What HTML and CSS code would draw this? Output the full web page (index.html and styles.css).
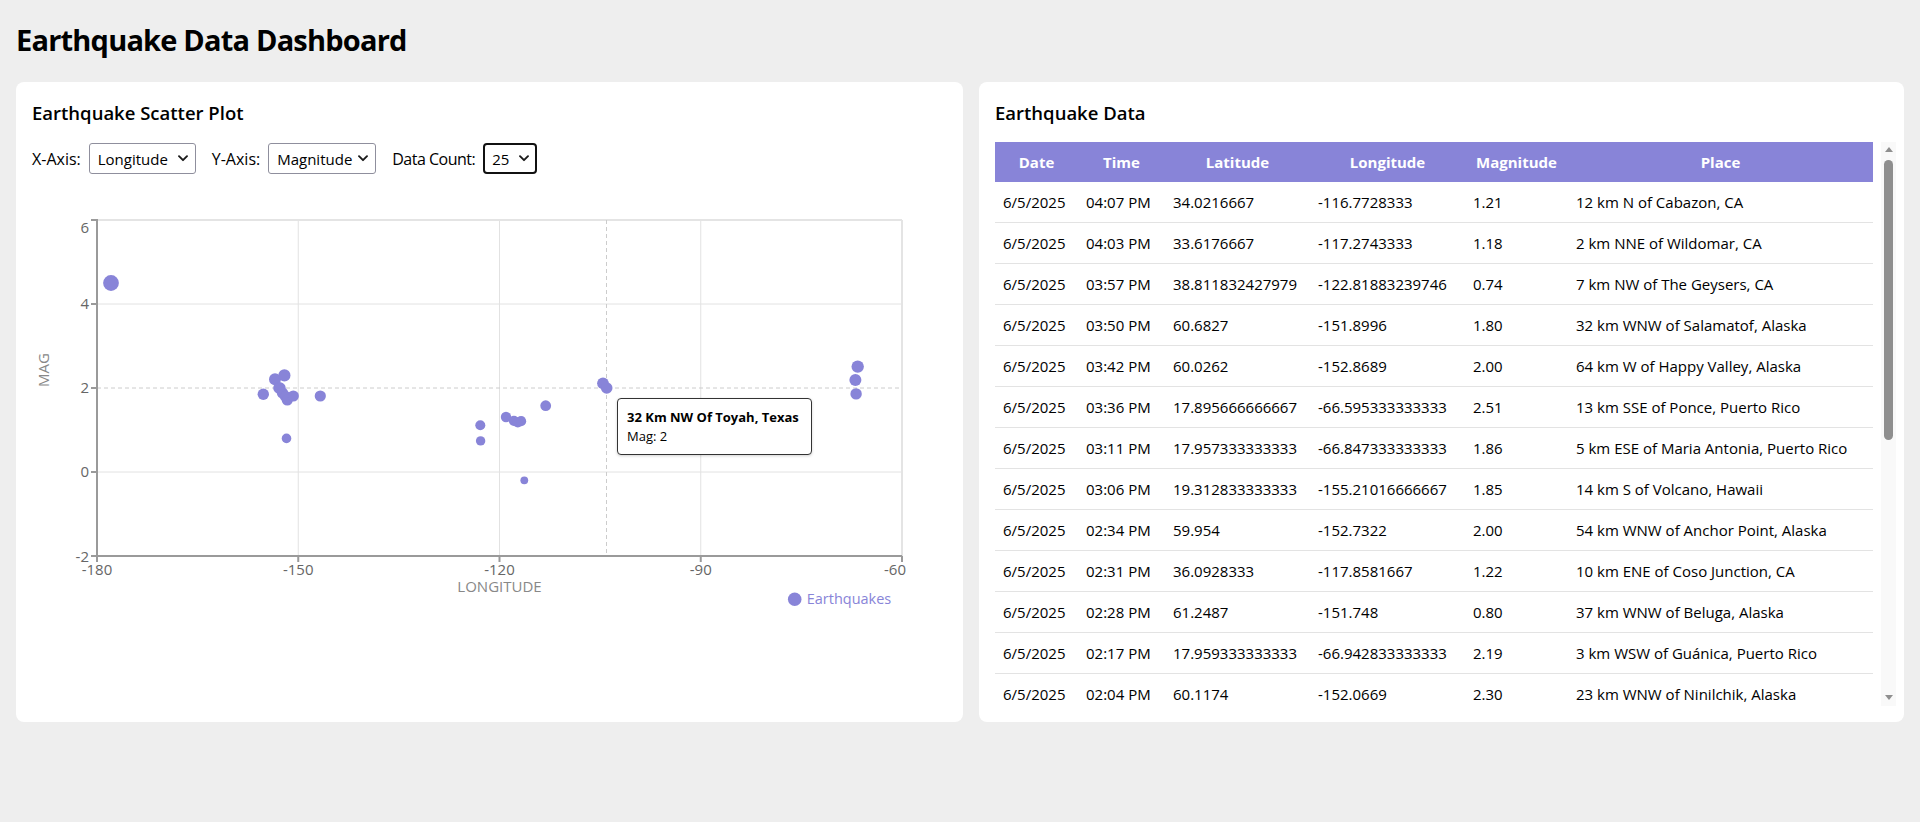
FILE: index.html
```html
<!DOCTYPE html>
<html lang="en">
<head>
<meta charset="utf-8">
<title>Earthquake Data Dashboard</title>
<link rel="stylesheet" href="styles.css">
</head>
<body>
<div class="page">
  <h1 class="page-title">Earthquake Data Dashboard</h1>
  <div class="dashboard">
    <section class="card card-chart">
      <h2 class="card-title">Earthquake Scatter Plot</h2>
      <div class="controls">
        <label class="control-label" for="xaxis">X-Axis:</label>
        <span class="select-wrap">
          <select id="xaxis" class="select select-x"><option>Longitude</option><option>Latitude</option><option>Magnitude</option></select>
          <svg class="chevron" viewBox="0 0 10 7" width="10" height="7"><path d="M1 1.2 L5 5.2 L9 1.2" fill="none" stroke="#1a1a1a" stroke-width="1.9" stroke-linecap="round" stroke-linejoin="round"/></svg>
        </span>
        <label class="control-label" for="yaxis">Y-Axis:</label>
        <span class="select-wrap">
          <select id="yaxis" class="select select-y"><option>Magnitude</option><option>Latitude</option><option>Longitude</option></select>
          <svg class="chevron" viewBox="0 0 10 7" width="10" height="7"><path d="M1 1.2 L5 5.2 L9 1.2" fill="none" stroke="#1a1a1a" stroke-width="1.9" stroke-linecap="round" stroke-linejoin="round"/></svg>
        </span>
        <label class="control-label control-label-tight" for="count">Data Count:</label>
        <span class="select-wrap">
          <select id="count" class="select select-count"><option>25</option><option>50</option><option>100</option></select>
          <svg class="chevron" viewBox="0 0 10 7" width="10" height="7"><path d="M1 1.2 L5 5.2 L9 1.2" fill="none" stroke="#1a1a1a" stroke-width="1.9" stroke-linecap="round" stroke-linejoin="round"/></svg>
        </span>
      </div>
      <div class="chart">
        <svg class="chart-svg" width="915" height="420" viewBox="0 0 915 420">
          <g class="grid">
            <line x1="65" y1="114" x2="870" y2="114"/>
            <line x1="65" y1="282" x2="870" y2="282"/>
            <line x1="266.25" y1="30" x2="266.25" y2="366"/>
            <line x1="467.5" y1="30" x2="467.5" y2="366"/>
            <line x1="668.75" y1="30" x2="668.75" y2="366"/>
          </g>
          <g class="grid-edge">
            <line x1="65" y1="30" x2="870" y2="30"/>
            <line x1="870" y1="30" x2="870" y2="366"/>
          </g>
          <g class="cursor">
            <line x1="65" y1="198" x2="870" y2="198"/>
            <line x1="574.5" y1="30" x2="574.5" y2="366"/>
          </g>
          <g class="axis">
            <line x1="65" y1="29" x2="65" y2="367"/>
            <line x1="64" y1="366" x2="870" y2="366"/>
            <line x1="59" y1="30" x2="65" y2="30"/>
            <line x1="59" y1="114" x2="65" y2="114"/>
            <line x1="59" y1="198" x2="65" y2="198"/>
            <line x1="59" y1="282" x2="65" y2="282"/>
            <line x1="59" y1="366" x2="65" y2="366"/>
            <line x1="65" y1="366" x2="65" y2="372"/>
            <line x1="266.25" y1="366" x2="266.25" y2="372"/>
            <line x1="467.5" y1="366" x2="467.5" y2="372"/>
            <line x1="668.75" y1="366" x2="668.75" y2="372"/>
            <line x1="870" y1="366" x2="870" y2="372"/>
          </g>
          <g class="tick-y">
            <text x="57" y="43.3">6</text>
            <text x="57" y="119">4</text>
            <text x="57" y="203">2</text>
            <text x="57" y="287">0</text>
            <text x="57" y="371.5">-2</text>
          </g>
          <g class="tick-x">
            <text x="65" y="385">-180</text>
            <text x="266.25" y="385">-150</text>
            <text x="467.5" y="385">-120</text>
            <text x="668.75" y="385">-90</text>
            <text x="863" y="385">-60</text>
          </g>
          <text class="axis-label" x="467.5" y="401.5">LONGITUDE</text>
          <text class="axis-label" transform="translate(17 180) rotate(-90)" x="0" y="0">MAG</text>
          <g class="points">
            <circle cx="79" cy="93" r="7.9"/>
            <circle cx="231.3" cy="204.3" r="5.7"/>
            <circle cx="243" cy="189.3" r="6"/>
            <circle cx="247" cy="198" r="5.8"/>
            <circle cx="247.9" cy="198" r="5.8"/>
            <circle cx="252.4" cy="185.4" r="6.1"/>
            <circle cx="250.5" cy="203" r="5.7"/>
            <circle cx="253.5" cy="206.4" r="5.6"/>
            <circle cx="255.3" cy="210" r="5.6"/>
            <circle cx="261.3" cy="206" r="5.6"/>
            <circle cx="254.5" cy="248.4" r="4.8"/>
            <circle cx="288.3" cy="206" r="5.6"/>
            <circle cx="448.3" cy="235.3" r="5"/>
            <circle cx="448.6" cy="250.9" r="4.7"/>
            <circle cx="474" cy="227" r="5.2"/>
            <circle cx="481.9" cy="230.8" r="5.1"/>
            <circle cx="485.8" cy="232.4" r="5.1"/>
            <circle cx="489.1" cy="231.2" r="5.1"/>
            <circle cx="492.3" cy="290.3" r="3.9"/>
            <circle cx="513.7" cy="215.7" r="5.4"/>
            <circle cx="571" cy="193.3" r="5.9"/>
            <circle cx="574.7" cy="198" r="5.8"/>
            <circle cx="825.7" cy="176.6" r="6.2"/>
            <circle cx="823.4" cy="190" r="6"/>
            <circle cx="824.1" cy="203.9" r="5.7"/>
          </g>
          <g class="legend">
            <circle cx="762.7" cy="409.3" r="6.8"/>
            <text x="774.7" y="413.5">Earthquakes</text>
          </g>
        </svg>
        <div class="tooltip">
          <div class="tooltip-title">32 Km NW Of Toyah, Texas</div>
          <div class="tooltip-value">Mag: 2</div>
        </div>
      </div>
    </section>

    <section class="card card-data">
      <h2 class="card-title">Earthquake Data</h2>
      <div class="table-area">
        <div class="table-viewport">
          <table class="data-table">
            <colgroup>
              <col class="col-date"><col class="col-time"><col class="col-lat"><col class="col-lon"><col class="col-mag"><col class="col-place">
            </colgroup>
            <thead>
              <tr><th>Date</th><th>Time</th><th>Latitude</th><th>Longitude</th><th>Magnitude</th><th>Place</th></tr>
            </thead>
            <tbody>
              <tr><td>6/5/2025</td><td>04:07 PM</td><td>34.0216667</td><td>-116.7728333</td><td>1.21</td><td>12 km N of Cabazon, CA</td></tr>
              <tr><td>6/5/2025</td><td>04:03 PM</td><td>33.6176667</td><td>-117.2743333</td><td>1.18</td><td>2 km NNE of Wildomar, CA</td></tr>
              <tr><td>6/5/2025</td><td>03:57 PM</td><td>38.811832427979</td><td>-122.81883239746</td><td>0.74</td><td>7 km NW of The Geysers, CA</td></tr>
              <tr><td>6/5/2025</td><td>03:50 PM</td><td>60.6827</td><td>-151.8996</td><td>1.80</td><td>32 km WNW of Salamatof, Alaska</td></tr>
              <tr><td>6/5/2025</td><td>03:42 PM</td><td>60.0262</td><td>-152.8689</td><td>2.00</td><td>64 km W of Happy Valley, Alaska</td></tr>
              <tr><td>6/5/2025</td><td>03:36 PM</td><td>17.895666666667</td><td>-66.595333333333</td><td>2.51</td><td>13 km SSE of Ponce, Puerto Rico</td></tr>
              <tr><td>6/5/2025</td><td>03:11 PM</td><td>17.957333333333</td><td>-66.847333333333</td><td>1.86</td><td>5 km ESE of Maria Antonia, Puerto Rico</td></tr>
              <tr><td>6/5/2025</td><td>03:06 PM</td><td>19.312833333333</td><td>-155.21016666667</td><td>1.85</td><td>14 km S of Volcano, Hawaii</td></tr>
              <tr><td>6/5/2025</td><td>02:34 PM</td><td>59.954</td><td>-152.7322</td><td>2.00</td><td>54 km WNW of Anchor Point, Alaska</td></tr>
              <tr><td>6/5/2025</td><td>02:31 PM</td><td>36.0928333</td><td>-117.8581667</td><td>1.22</td><td>10 km ENE of Coso Junction, CA</td></tr>
              <tr><td>6/5/2025</td><td>02:28 PM</td><td>61.2487</td><td>-151.748</td><td>0.80</td><td>37 km WNW of Beluga, Alaska</td></tr>
              <tr><td>6/5/2025</td><td>02:17 PM</td><td>17.959333333333</td><td>-66.942833333333</td><td>2.19</td><td>3 km WSW of Guánica, Puerto Rico</td></tr>
              <tr><td>6/5/2025</td><td>02:04 PM</td><td>60.1174</td><td>-152.0669</td><td>2.30</td><td>23 km WNW of Ninilchik, Alaska</td></tr>
            </tbody>
          </table>
        </div>
        <div class="scrollbar" aria-hidden="true">
          <span class="sb-btn sb-up"><span class="sb-arrow-up"></span></span>
          <span class="sb-track"><span class="sb-thumb"></span></span>
          <span class="sb-btn sb-down"><span class="sb-arrow-down"></span></span>
        </div>
      </div>
    </section>
  </div>
</div>
</body>
</html>
```

FILE: styles.css
```css
* {
  box-sizing: border-box;
}

html,
body {
  margin: 0;
}

body {
  background: #eeeeee;
  color: #000;
  font-family: "Open Sans", "Noto Sans", sans-serif;
}

.page {
  padding: 22px 16px 16px;
}

.page-title {
  margin: 0 0 24px;
  font-size: 29px;
  line-height: 36px;
  font-weight: 700;
  letter-spacing: -0.8px;
}

.dashboard {
  display: grid;
  grid-template-columns: 947px 1fr;
  gap: 16px;
}

.card {
  background: #fff;
  border-radius: 8px;
  padding: 19px 16px 16px;
}

.card-data {
  padding-right: 8px;
}

.card-title {
  margin: 0;
  font-size: 18.5px;
  line-height: 24px;
  font-weight: 600;
}

/* controls */
.controls {
  display: flex;
  align-items: center;
  height: 31px;
  margin-top: 18px;
  font-size: 16px;
}

.control-label {
  margin-right: 8px;
}

.control-label-tight {
  letter-spacing: -0.5px;
}

.select-wrap {
  position: relative;
  display: block;
  height: 31px;
  margin-right: 16px;
}

.select {
  -webkit-appearance: none;
  appearance: none;
  display: block;
  height: 31px;
  margin: 0;
  padding: 0 0 0 8px;
  border: 1px solid #8f8f9d;
  border-radius: 3px;
  background: #fff;
  color: #000;
  font-family: "Open Sans", "Noto Sans", sans-serif;
  font-size: 15px;
  outline: none;
}

.select-x {
  width: 107px;
}

.select-y {
  width: 108px;
}

.select-count {
  width: 54px;
  border: 2px solid #111;
  border-radius: 4px;
  padding-left: 7px;
}

.chevron {
  position: absolute;
  right: 8px;
  top: 12px;
  pointer-events: none;
}

/* chart */
.chart {
  position: relative;
  width: 915px;
  height: 420px;
  margin-top: 16px;
}

.chart-svg {
  display: block;
  font-family: "Open Sans", "Noto Sans", sans-serif;
}

.grid line {
  stroke: #e2e2e2;
  stroke-width: 1;
}

.grid-edge line {
  stroke: #e4e4e4;
  stroke-width: 2;
}

.cursor line {
  stroke: #cccccc;
  stroke-width: 1;
  stroke-dasharray: 4 3;
}

.axis line {
  stroke: #9a9a9a;
  stroke-width: 2;
}

.tick-y text {
  font-size: 15px;
  fill: #666;
  text-anchor: end;
}

.tick-x text {
  font-size: 15px;
  fill: #666;
  text-anchor: middle;
}

.axis-label {
  font-size: 15px;
  fill: #888;
  text-anchor: middle;
}

.points circle {
  fill: #8884d8;
}

.legend circle {
  fill: #8884d8;
}

.legend text {
  font-size: 14.5px;
  fill: #8884d8;
}

.tooltip {
  position: absolute;
  left: 585px;
  top: 208px;
  width: 195px;
  height: 57px;
  padding: 9px 9px 8px;
  background: #fff;
  border: 1px solid #333;
  border-radius: 4px;
  box-shadow: 0 1px 3px rgba(0, 0, 0, 0.18);
  font-size: 13px;
  line-height: 19px;
  white-space: nowrap;
}

.tooltip-title {
  font-weight: 700;
}

/* table */
.table-area {
  display: flex;
  gap: 8px;
  height: 564px;
  margin-top: 17px;
}

.table-viewport {
  flex: 1;
  min-width: 0;
  overflow: hidden;
}

.scrollbar {
  display: flex;
  flex-direction: column;
  width: 15px;
  flex: 0 0 15px;
  background: #f9f9f9;
}

.sb-btn {
  display: flex;
  justify-content: center;
  height: 17px;
  flex: 0 0 17px;
}

.sb-up {
  padding-top: 5px;
}

.sb-down {
  padding-top: 6px;
}

.sb-arrow-up {
  width: 0;
  height: 0;
  border-left: 4.5px solid transparent;
  border-right: 4.5px solid transparent;
  border-bottom: 5px solid #8f8f8f;
}

.sb-arrow-down {
  width: 0;
  height: 0;
  border-left: 4.5px solid transparent;
  border-right: 4.5px solid transparent;
  border-top: 5px solid #8f8f8f;
}

.sb-track {
  display: block;
  flex: 1;
  padding: 1px 3px;
}

.sb-thumb {
  display: block;
  height: 280px;
  border-radius: 5px;
  background: #8f8f8f;
}

.data-table {
  width: 100%;
  border-collapse: collapse;
  table-layout: fixed;
  font-size: 15px;
}

.col-date {
  width: 83px;
}

.col-time {
  width: 87px;
}

.col-lat {
  width: 145px;
}

.col-lon {
  width: 155px;
}

.col-mag {
  width: 103px;
}

.data-table th {
  padding: 8px;
  line-height: 24px;
  background: #8884d8;
  color: #fff;
  font-weight: 700;
  text-align: center;
  white-space: nowrap;
}

.data-table td {
  padding: 8px;
  line-height: 24px;
  border-bottom: 1px solid #e3e3e3;
  white-space: nowrap;
  overflow: hidden;
}
```
